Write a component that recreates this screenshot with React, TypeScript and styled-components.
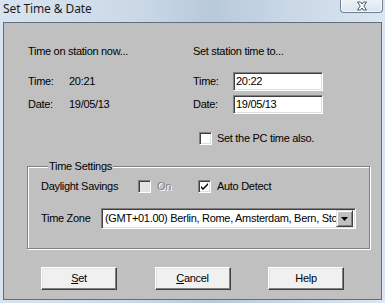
import React from 'react'
import styled, { createGlobalStyle } from 'styled-components'

const GlobalStyle = createGlobalStyle`
  html, body {
    margin: 0;
    padding: 0;
    background: #ffffff;
  }
  body {
    font-family: "Liberation Sans", Arial, sans-serif;
    font-size: 11px;
    letter-spacing: -0.3px;
    color: #000;
  }
`

const Window = styled.div`
  width: 385px;
  height: 303px;
  display: flex;
  flex-direction: column;
  background: linear-gradient(90deg, #d8e4f0 0%, #cbd9e7 35%, #b8c9da 55%, #c9d7e6 75%, #dbe6f1 100%);
  box-sizing: border-box;
  overflow: hidden;
`

const TitleBar = styled.div`
  height: 22px;
  flex: none;
  display: flex;
  justify-content: space-between;
  align-items: flex-start;
  padding: 0 2px 0 3px;
`

const Title = styled.div`
  font-family: "Noto Sans", "Open Sans", sans-serif;
  font-size: 12px;
  line-height: 17px;
  color: #1b1b1b;
  letter-spacing: -0.1px;
`

const CloseButton = styled.div`
  width: 43px;
  height: 14px;
  margin-top: -1px;
  box-sizing: border-box;
  border: 1px solid #6f7f92;
  border-top: none;
  border-radius: 0 0 4px 4px;
  background: linear-gradient(180deg, #eef3f8 0%, #dbe5ef 100%);
  box-shadow: inset 0 0 0 1px rgba(255, 255, 255, 0.7);
  display: flex;
  align-items: center;
  justify-content: center;
`

const Client = styled.div`
  flex: 1;
  margin: 0 3px 3px 3px;
  border: 1px solid #5f6f80;
  background: #c0c0c0;
  display: flex;
  flex-direction: column;
`

const TopGrid = styled.div`
  display: grid;
  grid-template-columns: 41px 124px 40px 90px;
  grid-template-rows: 23px 19px 19px;
  row-gap: 4px;
  padding: 22px 0 0 24px;
  align-items: center;
`

const Heading = styled.div`
  grid-column: span 2;
  line-height: 13px;
  align-self: start;
`

const Text = styled.span<{ $disabled?: boolean }>`
  line-height: 13px;
  white-space: nowrap;
  color: ${p => (p.$disabled ? '#808080' : '#000')};
  text-shadow: ${p => (p.$disabled ? '1px 1px 0 #ffffff' : 'none')};
`

const Sunken = styled.div`
  box-sizing: border-box;
  background: #ffffff;
  border: 1px solid;
  border-color: #808080 #ffffff #ffffff #808080;
  box-shadow: inset 1px 1px 0 #404040, inset -1px -1px 0 #dfdfdf;
`

const Field = styled(Sunken)`
  height: 19px;
  width: 90px;
  padding: 0 2px;
  line-height: 17px;
`

const CheckRow = styled.div`
  display: flex;
  align-items: center;
  gap: 5px;
  margin: 17px 0 0 195px;
  height: 15px;
`

const Box = styled(Sunken)<{ $disabled?: boolean }>`
  width: 13px;
  height: 13px;
  flex: none;
  background: ${p => (p.$disabled ? '#e4e4e4' : '#ffffff')};
  display: flex;
  align-items: center;
  justify-content: center;
`

const Group = styled.fieldset`
  margin: 14px 0 0 23px;
  width: 343px;
  height: 89px;
  box-sizing: border-box;
  padding: 0 0 0 13px;
  border: 1px solid #808080;
  box-shadow: 1px 1px 0 #ffffff, inset 1px 1px 0 #ffffff;
  display: flex;
  flex-direction: column;
`

const Legend = styled.legend`
  padding: 0 1px;
  margin-left: 7px;
  line-height: 13px;
  background: #c0c0c0;
`

const GroupRow = styled.div<{ $top: number }>`
  display: flex;
  align-items: center;
  margin-top: ${p => p.$top}px;
`

const LabelCell = styled.div<{ $w: number }>`
  width: ${p => p.$w}px;
  flex: none;
  display: flex;
  align-items: center;
  gap: 6px;
`

const Select = styled(Sunken)`
  width: 255px;
  height: 21px;
  display: flex;
  align-items: center;
  padding: 0 2px 0 3px;
  overflow: hidden;
`

const SelectText = styled.span`
  flex: 1;
  white-space: nowrap;
  overflow: hidden;
  line-height: 13px;
`

const DropButton = styled.div`
  width: 17px;
  height: 17px;
  flex: none;
  box-sizing: border-box;
  background: #c0c0c0;
  border: 1px solid;
  border-color: #dfdfdf #404040 #404040 #dfdfdf;
  box-shadow: inset 1px 1px 0 #ffffff, inset -1px -1px 0 #808080;
  display: flex;
  align-items: center;
  justify-content: center;
`

const ButtonRow = styled.div`
  display: flex;
  gap: 37.5px;
  padding: 18px 0 0 37px;
`

const Button = styled.div`
  width: 76px;
  height: 23px;
  box-sizing: border-box;
  background: #f0f0f0;
  border: 1px solid;
  border-color: #ffffff #404040 #404040 #ffffff;
  box-shadow: inset -1px -1px 0 #808080, inset 1px 1px 0 #e3e3e3;
  display: flex;
  align-items: center;
  justify-content: center;
  line-height: 13px;

  u {
    text-decoration: underline;
    text-underline-offset: 1px;
  }
`

const Check = () => (
  <svg width="7" height="7" viewBox="0 0 7 7">
    <path d="M0 3 L2 5 L7 0 L7 2 L2 7 L0 5 Z" fill="#000" />
  </svg>
)

const CloseX = () => (
  <svg width="12" height="10" viewBox="0 0 12 10">
    <path
      d="M1.5 1 L4.5 1 L6 3 L7.5 1 L10.5 1 L7.8 5 L10.5 9 L7.5 9 L6 7 L4.5 9 L1.5 9 L4.2 5 Z"
      fill="#ffffff"
      stroke="#4a5a6c"
      strokeWidth="1"
    />
  </svg>
)

export default function App() {
  return (
    <>
      <GlobalStyle />
      <Window>
        <TitleBar>
          <Title>Set Time &amp; Date</Title>
          <CloseButton>
            <CloseX />
          </CloseButton>
        </TitleBar>
        <Client>
          <TopGrid>
            <Heading>Time on station now...</Heading>
            <Heading>Set station time to...</Heading>
            <Text>Time:</Text>
            <Text>20:21</Text>
            <Text>Time:</Text>
            <Field>20:22</Field>
            <Text>Date:</Text>
            <Text>19/05/13</Text>
            <Text>Date:</Text>
            <Field>19/05/13</Field>
          </TopGrid>
          <CheckRow>
            <Box />
            <Text>Set the PC time also.</Text>
          </CheckRow>
          <Group>
            <Legend>Time Settings</Legend>
            <GroupRow $top={7}>
              <LabelCell $w={97}>
                <Text>Daylight Savings</Text>
              </LabelCell>
              <LabelCell $w={60}>
                <Box $disabled />
                <Text $disabled>On</Text>
              </LabelCell>
              <LabelCell $w={120}>
                <Box>
                  <Check />
                </Box>
                <Text>Auto Detect</Text>
              </LabelCell>
            </GroupRow>
            <GroupRow $top={15}>
              <LabelCell $w={60}>
                <Text>Time Zone</Text>
              </LabelCell>
              <Select>
                <SelectText>(GMT+01.00) Berlin, Rome, Amsterdam, Bern, Stockholm, Vienna</SelectText>
                <DropButton>
                  <svg width="7" height="4" viewBox="0 0 7 4">
                    <path d="M0 0 H7 L3.5 4 Z" fill="#000" />
                  </svg>
                </DropButton>
              </Select>
            </GroupRow>
          </Group>
          <ButtonRow>
            <Button>
              <span>
                <u>S</u>et
              </span>
            </Button>
            <Button>
              <span>
                <u>C</u>ancel
              </span>
            </Button>
            <Button>Help</Button>
          </ButtonRow>
        </Client>
      </Window>
    </>
  )
}
